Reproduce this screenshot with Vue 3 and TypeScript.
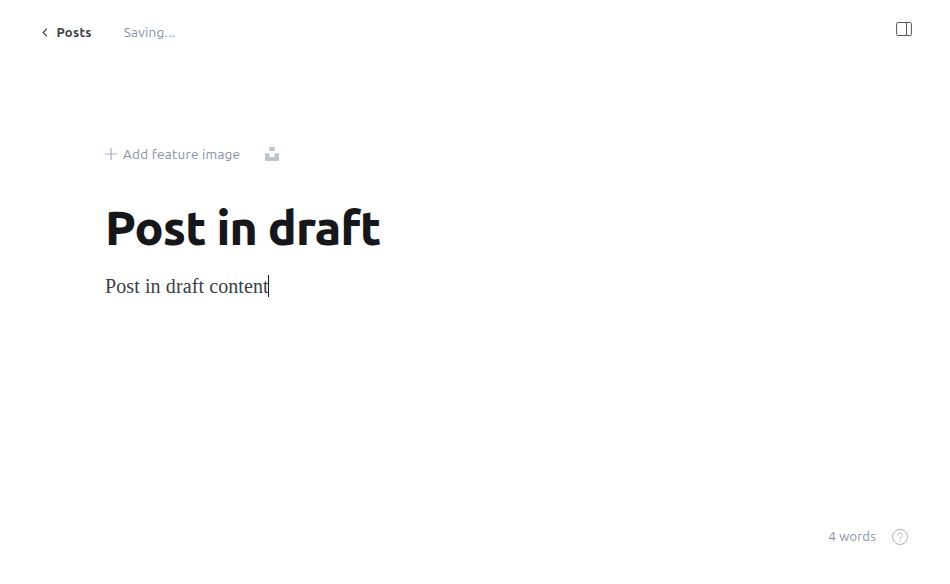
<script setup lang="ts">
import { computed, ref } from 'vue'

const title = ref('Post in draft')
const body = ref('Post in draft content')
const status = ref('Saving...')
const wordCount = computed(() => body.value.trim().split(/\s+/).length)
</script>

<template>
  <div class="editor">
    <header class="topbar">
      <nav class="crumbs">
        <a class="back">
          <svg class="chevron" width="6" height="9" viewBox="0 0 6 9"><path d="M4.9 .7 1.2 4.5l3.7 3.8" /></svg>
          <span class="back-label">Posts</span>
        </a>
        <span class="status">{{ status }}</span>
      </nav>
      <button class="sidebar-toggle" aria-label="Settings">
        <svg width="16" height="14" viewBox="0 0 16 14">
          <rect x=".6" y=".5" width="14.8" height="13" rx="1.2" />
          <path d="M10.5 .5v13" />
        </svg>
      </button>
    </header>

    <main class="canvas">
      <div class="feature">
        <svg class="plus" width="12" height="12" viewBox="0 0 12 12"><path d="M6 0v12M0 6h12" /></svg>
        <span class="feature-label">Add feature image</span>
        <svg class="unsplash" width="14" height="14" viewBox="0 0 14 14"><path d="M4.4 0h5.2v4H4.4zM0 6.2h4.4v3.9h5.2V6.2H14V14H0z" /></svg>
      </div>
      <h1 class="title">{{ title }}</h1>
      <p class="body"><span>{{ body }}</span><i class="caret"></i></p>
    </main>

    <footer class="footer">
      <span class="words">{{ wordCount }} words</span>
      <svg class="help" width="16" height="16" viewBox="0 0 16 16">
        <circle cx="8" cy="8" r="7.5" />
        <path d="M5.7 6.3a2.3 2.3 0 1 1 3.5 2C8.4 8.8 8 9.1 8 10.2" />
        <circle class="dot" cx="8" cy="12" r=".65" />
      </svg>
    </footer>
  </div>
</template>

<style>
body {
  background: #fff;
}
</style>

<style scoped>
.editor {
  box-sizing: border-box;
  display: flex;
  flex-direction: column;
  height: 584px;
  overflow: hidden;
  font-family: Ubuntu, "Noto Sans", sans-serif;
  font-size: 13px;
  line-height: 20px;
  letter-spacing: 0.2px;
  color: #8492a6;
  white-space: nowrap;
}

.topbar {
  display: flex;
  justify-content: space-between;
  align-items: flex-start;
  padding: 22px 38px 0 42px;
}

.crumbs,
.back,
.feature,
.footer {
  display: flex;
  align-items: center;
}

.back {
  width: 81.7px;
  color: #394047;
  font-weight: 700;
}

.back-label {
  letter-spacing: 0.3px;
}

.chevron {
  margin-right: 8.5px;
}

.status,
.feature-label {
  font-size: 13.5px;
  letter-spacing: 0.26px;
}

svg {
  flex: none;
  fill: none;
  stroke: currentColor;
}

.chevron {
  stroke-width: 1.2;
}

.sidebar-toggle {
  display: flex;
  padding: 0;
  border: 0;
  background: none;
  color: #50575e;
}

.canvas {
  flex: 1;
  padding: 102px 105px 0;
}

.plus {
  margin-right: 6px;
  stroke-width: 1.2;
  color: #a5afba;
}

.feature-label {
  width: 142px;
}

.unsplash {
  fill: #bdc5cb;
  stroke: none;
}

.title {
  margin: 33px 0 0;
  font-size: 48px;
  font-weight: 800;
  line-height: 60px;
  letter-spacing: -0.8px;
  color: #15171a;
}

.body {
  display: flex;
  align-items: center;
  margin: 13px 0 0;
  font-family: "Liberation Serif", serif;
  font-size: 20px;
  line-height: 32px;
  letter-spacing: 0.1px;
  color: #394047;
}

.caret {
  width: 1px;
  height: 22px;
  margin-left: -1px;
  background: #15171a;
}

.footer {
  justify-content: flex-end;
  padding: 0 42px 38px 0;
}

.words {
  margin-right: 16px;
}

.help {
  margin-top: 2px;
  color: #a9b2be;
}

.dot {
  fill: currentColor;
  stroke: none;
}
</style>
